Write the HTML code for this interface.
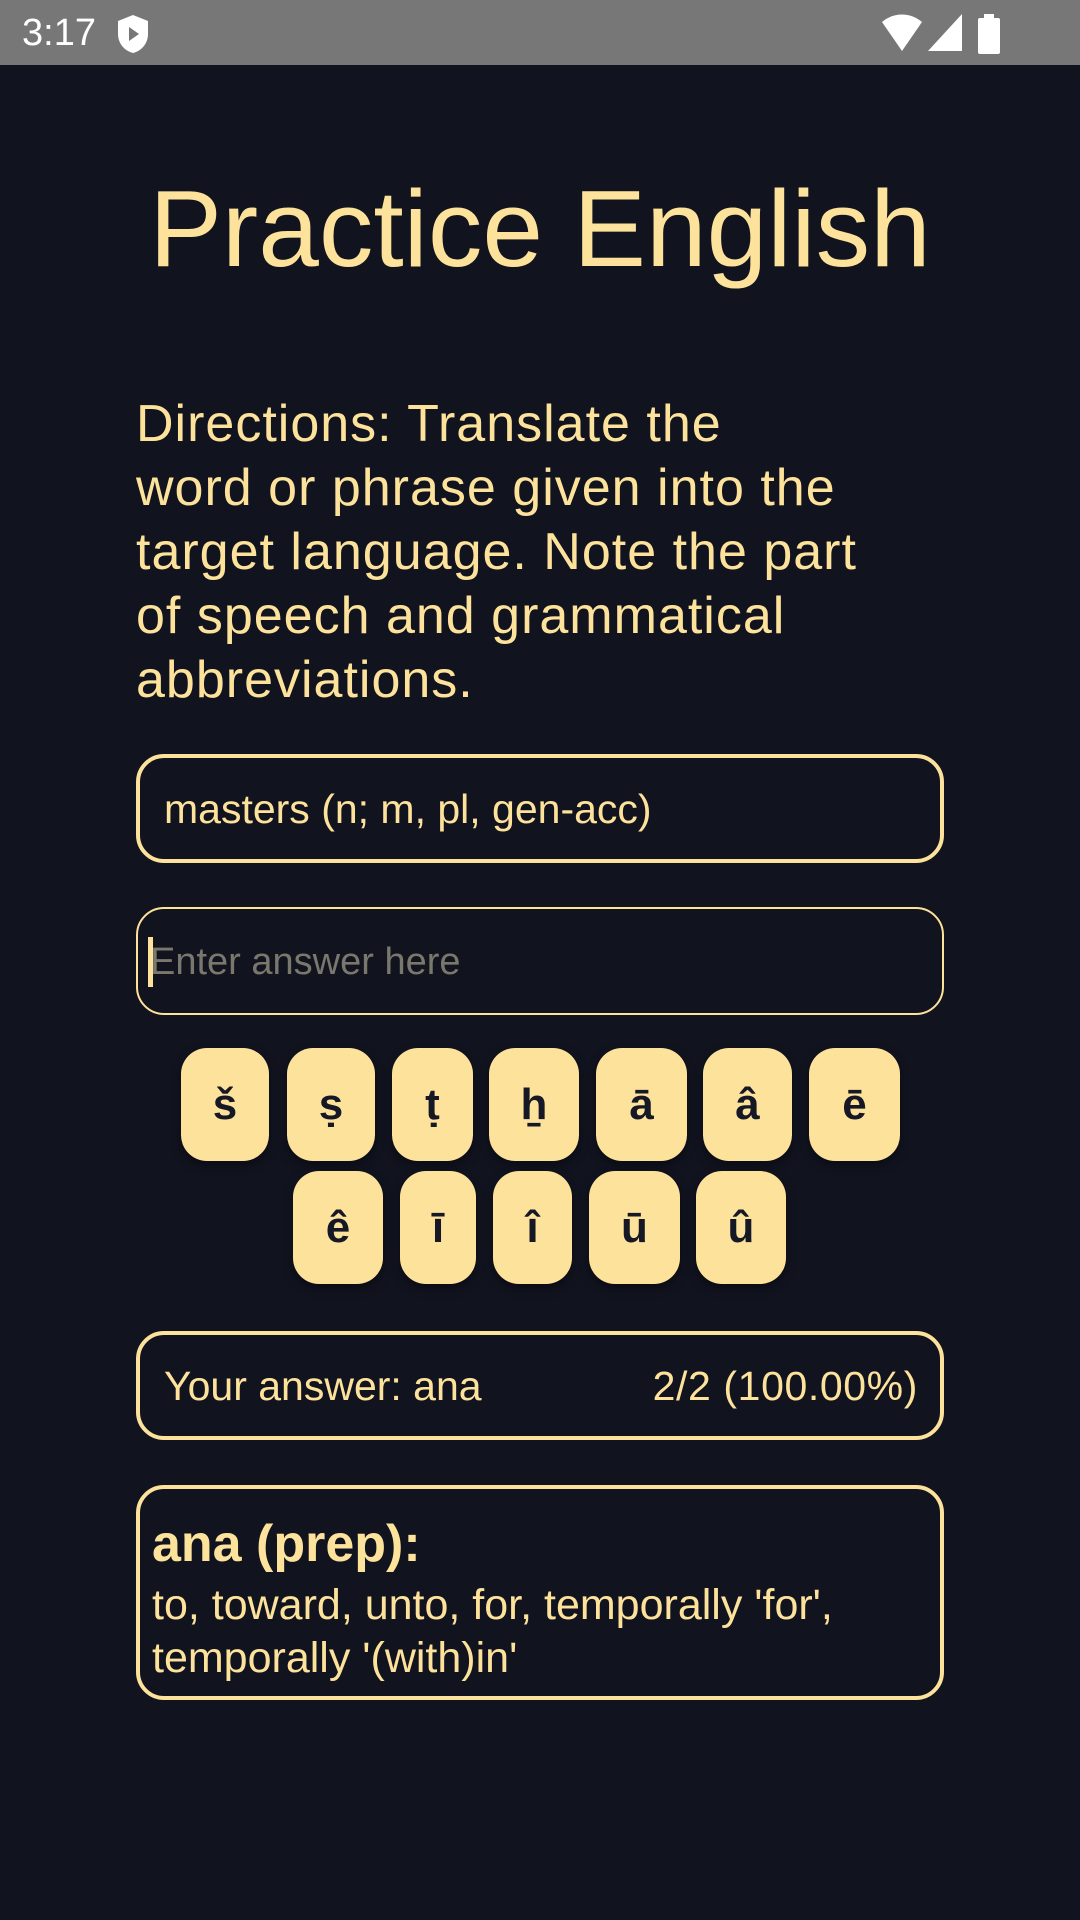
<!DOCTYPE html>
<html><head><meta charset="utf-8"><style>
*{margin:0;padding:0;box-sizing:border-box}
body{width:1080px;height:1920px;background:#11131f;font-family:"Liberation Sans",sans-serif;color:#fde29b;position:relative;overflow:hidden}
.sb{position:absolute;left:0;top:0;width:1080px;height:65px;background:#777}
.abs{position:absolute;white-space:nowrap}
.box{position:absolute;left:136px;width:808px;border:4px solid #fde29b;border-radius:28px}
.k{position:absolute;height:113px;background:#fde29b;border-radius:26px;color:#161826;font-weight:bold;font-size:44px;display:flex;align-items:center;justify-content:center;box-shadow:0 4px 10px rgba(0,0,0,.4)}
</style></head><body>
<div class="sb">
 <div class="abs" style="left:22px;top:12px;font-size:38px;color:#fff">3:17</div>
 <svg class="abs" style="left:116px;top:14px" width="34" height="40" viewBox="0 0 34 40"><path d="M17 1 L32 7 V20 C32 30 25 37 17 39 C9 37 2 30 2 20 V7 Z" fill="#fff"/><path d="M13 13 L23 20 L13 27 Z" fill="#777"/></svg>
 <svg class="abs" style="left:882px;top:14px" width="40" height="38" viewBox="0 0 40 38"><path d="M0 8 C12 -2 28 -2 40 8 L20 37 Z" fill="#fff"/></svg>
 <svg class="abs" style="left:928px;top:14px" width="34" height="38" viewBox="0 0 34 38"><path d="M34 0 V37 H0 Z" fill="#fff"/></svg>
 <svg class="abs" style="left:978px;top:14px" width="22" height="40" viewBox="0 0 22 40"><rect x="6" y="0" width="10" height="5" fill="#fff"/><rect x="0" y="4" width="22" height="36" rx="2" fill="#fff"/></svg>
</div>
<div class="abs" style="left:0;width:1080px;text-align:center;top:164px;font-size:109px;line-height:130px">Practice English</div>
<div class="abs" style="left:136px;top:392px;font-size:52px;line-height:64px;letter-spacing:1px">Directions: Translate the<br>word or phrase given into the<br>target language. Note the part<br>of speech and grammatical<br>abbreviations.</div>
<div class="box" style="top:754px;height:109px"><div class="abs" style="left:24px;top:27px;font-size:41px;line-height:48px">masters (n; m, pl, gen-acc)</div></div>
<div class="box" style="top:907px;height:108px;border-width:2px"><div class="abs" style="left:10px;top:28px;width:5px;height:50px;background:#fde29b"></div><div class="abs" style="left:12px;top:30px;font-size:38px;line-height:46px;color:#7a776c">Enter answer here</div></div>
<div class="k" style="left:181px;top:1048px;width:88px">š</div>
<div class="k" style="left:287px;top:1048px;width:88px">ṣ</div>
<div class="k" style="left:392px;top:1048px;width:81px">ṭ</div>
<div class="k" style="left:489px;top:1048px;width:90px">ẖ</div>
<div class="k" style="left:596px;top:1048px;width:91px">ā</div>
<div class="k" style="left:703px;top:1048px;width:89px">â</div>
<div class="k" style="left:809px;top:1048px;width:91px">ē</div>
<div class="k" style="left:293px;top:1171px;width:90px">ê</div>
<div class="k" style="left:400px;top:1171px;width:76px">ī</div>
<div class="k" style="left:493px;top:1171px;width:79px">î</div>
<div class="k" style="left:589px;top:1171px;width:91px">ū</div>
<div class="k" style="left:696px;top:1171px;width:90px">û</div>
<div class="box" style="top:1331px;height:109px"><div class="abs" style="left:24px;top:27px;font-size:41px;line-height:48px">Your answer: ana</div><div class="abs" style="right:22px;top:27px;font-size:41px;line-height:48px;letter-spacing:0.6px">2/2 (100.00%)</div></div>
<div class="box" style="top:1485px;height:215px">
 <div class="abs" style="left:12px;top:26px;font-size:52px;font-weight:bold;line-height:58px">ana (prep):</div>
 <div class="abs" style="left:12px;top:90px;font-size:43px;line-height:53px">to, toward, unto, for, temporally 'for',<br>temporally '(with)in'</div>
</div>
</body></html>
